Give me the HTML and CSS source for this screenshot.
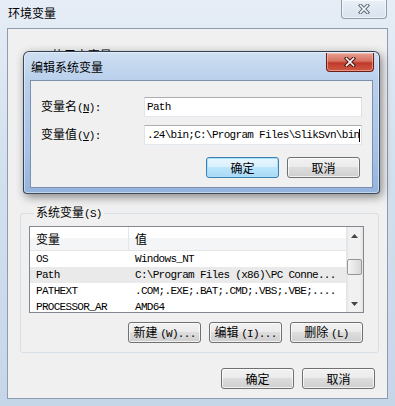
FILE: index.html
```html
<!DOCTYPE html>
<html lang="zh-CN">
<head>
  <meta charset="UTF-8" />
  <title>环境变量</title>
  <link rel="stylesheet" href="styles.css">
</head>
<body>

<div class="window">
  <div class="titlebar">
    <span class="title">环境变量</span>
    <span class="close inactive">
      <svg width="12" height="10" viewBox="0 0 12 10">
        <path d="M2.5 1.5 L9.5 8.5 M9.5 1.5 L2.5 8.5" stroke="#5d6a78" stroke-width="3.6" stroke-linecap="square" fill="none"/>
        <path d="M2.5 1.5 L9.5 8.5 M9.5 1.5 L2.5 8.5" stroke="#f4f7fa" stroke-width="1.6" stroke-linecap="square" fill="none"/>
      </svg>
    </span>
  </div>

  <div class="client">
    <div class="user-group">
      <span class="group-label"><span class="mn user">ll</span>的用户变量<span class="mn">(U)</span></span>
    </div>

    <fieldset class="group">
      <legend>系统变量<span class="mn">(S)</span></legend>
      <div class="listbox">
        <div class="list">
          <div class="lv-head"><span class="h1">变量</span><span class="h2">值</span></div>
          <div class="lv-row"><span class="c1">OS</span><span class="c2">Windows_NT</span></div>
          <div class="lv-row sel"><span class="c1">Path</span><span class="c2">C:\Program Files (x86)\PC Conne...</span></div>
          <div class="lv-row"><span class="c1">PATHEXT</span><span class="c2">.COM;.EXE;.BAT;.CMD;.VBS;.VBE;....</span></div>
          <div class="lv-row"><span class="c1">PROCESSOR_AR</span><span class="c2">AMD64</span></div>
        </div>
        <div class="vscroll">
          <div class="arrow">
            <svg width="7" height="4" viewBox="0 0 7 4"><path d="M0 4 L3.5 0 L7 4 Z" fill="#444"/></svg>
          </div>
          <div class="track"><div class="thumb"></div></div>
          <div class="arrow">
            <svg width="7" height="4" viewBox="0 0 7 4"><path d="M0 0 L3.5 4 L7 0 Z" fill="#444"/></svg>
          </div>
        </div>
      </div>
      <div class="btn-row">
        <button class="btn">新建 <span class="mn">(W)...</span></button>
        <button class="btn">编辑 <span class="mn">(I)...</span></button>
        <button class="btn">删除 <span class="mn">(L)</span></button>
      </div>
    </fieldset>

    <div class="btn-row bottom">
      <button class="btn">确定</button>
      <button class="btn">取消</button>
    </div>
  </div>

  <div class="dialog">
    <div class="dlg-title">
      <span class="title">编辑系统变量</span>
      <span class="close red">
        <svg width="12" height="10" viewBox="0 0 12 10">
          <path d="M2.5 1.5 L9.5 8.5 M9.5 1.5 L2.5 8.5" stroke="#4a1610" stroke-width="3.6" stroke-linecap="square" fill="none"/>
          <path d="M2.5 1.5 L9.5 8.5 M9.5 1.5 L2.5 8.5" stroke="#ffffff" stroke-width="1.6" stroke-linecap="square" fill="none"/>
        </svg>
      </span>
    </div>
    <div class="dlg-client">
      <div class="form">
        <label class="lbl">变量名<span class="mn">(<u>N</u>):</span></label>
        <div class="field"><span class="mn">Path</span></div>
        <label class="lbl">变量值<span class="mn">(<u>V</u>):</span></label>
        <div class="field"><span class="mn">.24\bin;C:\Program Files\SlikSvn\bin</span><span class="caret"></span></div>
      </div>
      <div class="btn-row dlg-btns">
        <button class="btn default">确定</button>
        <button class="btn">取消</button>
      </div>
    </div>
  </div>
</div>

</body>
</html>
```

FILE: styles.css
```css
body {
  margin: 0;
  width: 395px;
  height: 406px;
  overflow: hidden;
  background: linear-gradient(#e6edf6, #d3e0ee 40%, #c6d6e9);
  font-family: "Noto Sans CJK SC", sans-serif;
  font-size: 12px;
  color: #000;
}

.window {
  position: relative;
  height: 406px;
}

.mn {
  font-family: "Liberation Mono", monospace;
  font-size: 11px;
  letter-spacing: -0.7px;
}

.titlebar {
  height: 28px;
  display: flex;
  justify-content: space-between;
  align-items: flex-start;
  padding: 0 8px;
}

.title {
  margin-top: 5px;
  line-height: 16px;
  font-size: 12px;
}

.close {
  display: flex;
  align-items: center;
  justify-content: center;
  box-sizing: border-box;
}

.close.inactive {
  width: 46px;
  height: 19px;
  border: 1px solid #8e9caa;
  border-top: none;
  border-radius: 0 0 4px 4px;
  background: linear-gradient(#e9eff6, #d8e2ee);
  box-shadow: inset 0 0 0 1px rgba(255, 255, 255, 0.6);
}

.client {
  margin: 0 7px;
  height: 369px;
  border: 1px solid #8d9cae;
  background: #f0f0f0;
}

.user-group {
  height: 159px;
  padding: 17px 0 0 20px;
}

.group-label {
  line-height: 14px;
}

.user {
  margin-right: 12px;
}

.group {
  margin: 0 8px 0 12px;
  padding: 5px 14px 9px 8px;
  border: 1px solid #d5dfe5;
  border-radius: 3px;
  min-width: 0;
}

.group legend {
  margin-left: 5px;
  padding: 0 2px;
  line-height: 14px;
}

.listbox {
  height: 85px;
  border: 1px solid #828790;
  background: #fff;
  display: flex;
}

.list {
  flex: 1;
  overflow: hidden;
}

.lv-head {
  height: 23px;
  line-height: 23px;
  display: flex;
  border-bottom: 1px solid #e5e5e5;
  background: linear-gradient(#fff 50%, #f4f5f7 50%);
}

.h1 {
  width: 99px;
  padding-left: 6px;
  box-sizing: border-box;
  border-right: 1px solid #e3e6ea;
}

.h2 {
  padding-left: 6px;
}

.lv-row {
  height: 16px;
  line-height: 16px;
  display: flex;
  font-family: "Liberation Mono", monospace;
  font-size: 11px;
  letter-spacing: -0.7px;
  white-space: nowrap;
}

.lv-row.sel {
  background: #eaeaea;
}

.c1 {
  width: 105px;
  padding-left: 6px;
  box-sizing: border-box;
}

.vscroll {
  width: 17px;
  display: flex;
  flex-direction: column;
  background: linear-gradient(to right, #e2e2e2, #f1f1f1 20%, #f1f1f1 80%, #e4e4e4);
}

.arrow {
  height: 17px;
  display: flex;
  align-items: center;
  justify-content: center;
}

.track {
  flex: 1;
}

.thumb {
  margin: 15px 1px 0 1px;
  height: 16px;
  border: 1px solid #979797;
  border-radius: 2px;
  box-sizing: border-box;
  background: linear-gradient(to right, #f5f5f5, #e6e6e6 50%, #d8d8d8);
}

.btn-row {
  display: flex;
  justify-content: flex-end;
  gap: 8px;
}

.group .btn-row {
  margin-top: 9px;
  padding-right: 1px;
}

.btn-row.bottom {
  margin-top: 15px;
  padding-right: 12px;
}

.btn {
  width: 73px;
  height: 21px;
  padding: 0;
  box-sizing: border-box;
  border: 1px solid #707070;
  border-radius: 3px;
  background: linear-gradient(#f2f2f2 0%, #ebebeb 45%, #dddddd 50%, #cfcfcf 100%);
  box-shadow: inset 0 0 0 1px rgba(255, 255, 255, 0.7);
  font-family: "Noto Sans CJK SC", sans-serif;
  font-size: 12px;
  line-height: 18px;
  color: #000;
  text-align: center;
}

.btn.default {
  border-color: #3c7fb1;
  background: linear-gradient(#eaf6fd 0%, #d9f0fc 45%, #bee6fd 50%, #a7d9f5 100%);
  box-shadow: inset 0 0 0 1px #a9e0fb;
}

/* edit dialog, lies over the main window */
.dialog {
  position: absolute;
  left: 23px;
  top: 51px;
  width: 357px;
  height: 143px;
  box-sizing: border-box;
  border: 1px solid rgba(25, 35, 50, 0.8);
  border-radius: 6px 6px 4px 4px;
  padding: 0 6px 5px 6px;
  background: linear-gradient(#cfdff3, #b9d0ec 28px, #a6c2e7 70%, #93b3de);
  box-shadow: 2px 3px 10px rgba(0, 0, 0, 0.45), inset 0 0 0 1px rgba(255, 255, 255, 0.45);
}

.dlg-title {
  height: 28px;
  display: flex;
  justify-content: space-between;
  align-items: flex-start;
  padding-left: 1px;
}

.dlg-title .title {
  margin-top: 7px;
}

.close.red {
  width: 48px;
  height: 19px;
  margin: 1px -1px 0 0;
  border: 1px solid #6b1d14;
  border-top: none;
  border-radius: 0 0 4px 4px;
  background: linear-gradient(#e8a193, #d5705f 45%, #c0392a 55%, #cf5a44);
  box-shadow: inset 0 0 0 1px rgba(255, 210, 200, 0.5);
}

.dlg-client {
  height: 108px;
  box-sizing: border-box;
  border: 1px solid #7c90ae;
  background: #f0f0f0;
}

.form {
  display: grid;
  grid-template-columns: 103px 218px;
  grid-auto-rows: 20px;
  row-gap: 8px;
  align-items: center;
  padding: 16px 10px 0 10px;
}

.lbl {
  line-height: 16px;
}

.field {
  height: 20px;
  box-sizing: border-box;
  border: 1px solid #abadb3;
  border-color: #abadb3 #dbdfe6 #e3e9ef #e2e3ea;
  background: #fff;
  padding-left: 2px;
  line-height: 18px;
  white-space: nowrap;
  overflow: hidden;
  display: flex;
  align-items: center;
}

.caret {
  width: 1px;
  height: 13px;
  background: #000;
}

.dlg-btns {
  margin-top: 12px;
  padding-right: 12px;
}
```
